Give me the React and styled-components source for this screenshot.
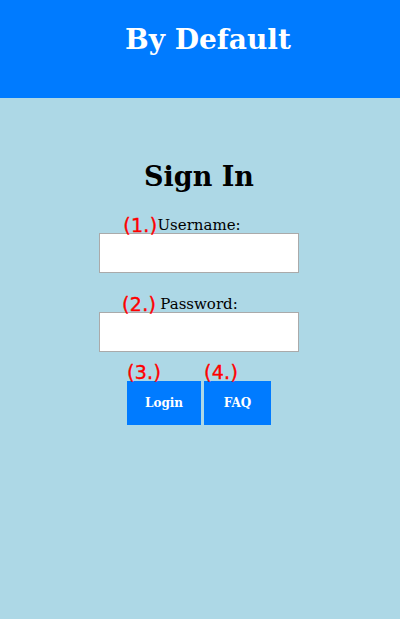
import React from 'react';
import styled, { createGlobalStyle } from 'styled-components';

const Global = createGlobalStyle`
  html, body {
    margin: 0;
    padding: 0;
    background: #add8e6;
    font-family: "DejaVu Serif", "Liberation Serif", serif;
  }
`;

const Header = styled.header`
  height: 98px;
  background: #007bff;
  display: flex;
  justify-content: center;
`;

const Title = styled.h1`
  margin: 0;
  padding: 22px 0 0 16px;
  color: #fff;
  font-size: 28px;
  line-height: 36px;
  font-weight: bold;
`;

const Main = styled.main`
  display: flex;
  flex-direction: column;
  align-items: center;
  padding-top: 61px;
  padding-right: 2px;
`;

const Heading = styled.h2`
  margin: 0 0 21px;
  font-size: 27px;
  line-height: 36px;
  font-weight: bold;
  color: #000;
`;

const Field = styled.div`
  display: flex;
  flex-direction: column;
  align-items: center;
  margin-bottom: ${(p) => p.gap || 0}px;
`;

const Label = styled.label`
  position: relative;
  font-size: 15px;
  line-height: 18px;
  color: #000;
  margin-bottom: -1px;
`;

const Mark = styled.span`
  position: absolute;
  right: 100%;
  margin-right: ${(p) => p.space || 0}px;
  bottom: -2px;
  color: red;
  font-family: "DejaVu Sans", Verdana, sans-serif;
  font-size: 19px;
  line-height: 22px;
  letter-spacing: 0.3px;
  -webkit-text-stroke: 0.4px red;
  white-space: nowrap;
`;

const Input = styled.input`
  box-sizing: border-box;
  width: 200px;
  height: 40px;
  border: 1px solid #aaa;
  background: #fff;
  margin: 0;
`;

const Buttons = styled.div`
  display: flex;
  gap: 3px;
  margin-top: 29px;
`;

const Btn = styled.button`
  position: relative;
  width: ${(p) => p.w}px;
  height: 44px;
  border: none;
  background: #007bff;
  color: #fff;
  font-family: "DejaVu Serif", "Liberation Serif", serif;
  font-size: 12px;
  font-weight: bold;
  padding: 0;
`;

const BtnMark = styled.span`
  position: absolute;
  left: 0;
  bottom: 100%;
  margin-bottom: -2px;
  color: red;
  font-family: "DejaVu Sans", Verdana, sans-serif;
  font-size: 19px;
  line-height: 22px;
  letter-spacing: 0.3px;
  -webkit-text-stroke: 0.4px red;
  font-weight: normal;
`;

export default function App() {
  return (
    <>
      <Global />
      <Header>
        <Title>By Default</Title>
      </Header>
      <Main>
        <Heading>Sign In</Heading>
        <Field gap={22}>
          <Label>
            <Mark>(1.)</Mark>
            Username:
          </Label>
          <Input type="text" />
        </Field>
        <Field>
          <Label>
            <Mark space={4}>(2.)</Mark>
            Password:
          </Label>
          <Input type="password" />
        </Field>
        <Buttons>
          <Btn w={74}>
            <BtnMark>(3.)</BtnMark>
            Login
          </Btn>
          <Btn w={67}>
            <BtnMark>(4.)</BtnMark>
            FAQ
          </Btn>
        </Buttons>
      </Main>
    </>
  );
}
